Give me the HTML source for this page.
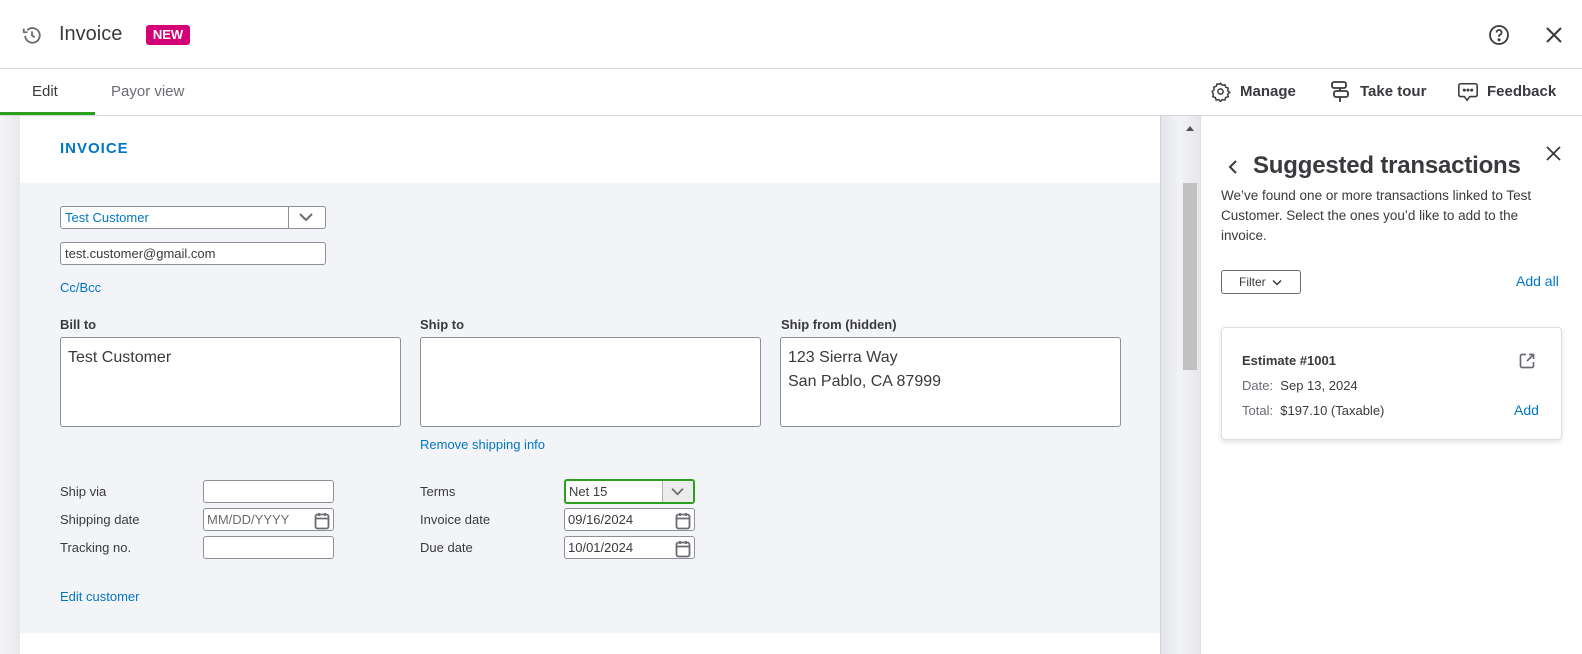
<!DOCTYPE html>
<html><head><meta charset="utf-8"><style>
*{box-sizing:border-box;margin:0;padding:0}
body{width:1582px;height:654px;overflow:hidden;background:#fff;font-family:"Liberation Sans",Arial,sans-serif;position:relative;color:#393a3d}
.abs{position:absolute}
.lbl{font-size:13px;color:#393a3d}
.inp{position:absolute;background:#fff;border:1px solid #8d9096;border-radius:3px;height:23px;font-size:13px;padding:3px 4px}
.link{color:#0077c5;font-size:13px}
.ta{position:absolute;background:#fff;border:1px solid #8d9096;border-radius:3px;width:341px;height:90px;font-size:16px;padding:8px 7px;line-height:24px}
.cal{position:absolute;right:3px;top:3px}
</style></head><body>
<svg class="abs" style="left:21px;top:24px" width="22" height="22" viewBox="0 0 24 24" fill="none" stroke="#6b6c72" stroke-width="2"><path d="M4.5 13a8 8 0 1 0 2.3-6.2"/><path d="M3 5v4h4" stroke-linejoin="round"/><path d="M12 8v4.5l3 2"/></svg>
<div class="abs" style="left:59px;top:23px;font-size:20px;color:#393a3d">Invoice</div>
<div class="abs" style="left:146px;top:25px;width:44px;height:20px;background:#d40078;border-radius:3px;color:#fff;font-weight:bold;font-size:13px;text-align:center;line-height:20px">NEW</div>
<svg class="abs" style="left:1487px;top:23px" width="24" height="24" viewBox="0 0 24 24" fill="none" stroke="#393a3d" stroke-width="1.8"><circle cx="12" cy="12" r="9"/><path d="M9.6 9.5a2.5 2.5 0 1 1 3.4 2.3c-.7.3-1 .8-1 1.5v.5"/><circle cx="12" cy="16.8" r=".6" fill="#393a3d"/></svg>
<svg class="abs" style="left:1544px;top:25px" width="20" height="20" viewBox="0 0 20 20" stroke="#393a3d" stroke-width="2"><path d="M3 3l14 14M17 3L3 17"/></svg>
<div class="abs" style="left:0;top:68px;width:1582px;height:1px;background:#d4d7dc"></div>
<div class="abs" style="left:32px;top:83px;font-size:15px;color:#393a3d">Edit</div>
<div class="abs" style="left:111px;top:83px;font-size:15px;color:#6b6c72">Payor view</div>
<div class="abs" style="left:0;top:112px;width:95px;height:4px;background:#2ca01c"></div>
<div class="abs" style="left:0;top:115px;width:1582px;height:1px;background:#d4d7dc"></div>
<svg class="abs" style="left:1210px;top:81px" width="21" height="21" viewBox="0 0 24 24" fill="none" stroke="#393a3d" stroke-width="1.7"><circle cx="12" cy="12" r="3"/><path d="M12 2.5l2 2.3 3-.6.9 2.9 2.9 1-.6 3 2.3 1.9-2.3 2 .6 3-2.9.9-1 2.9-3-.6-1.9 2.3-2-2.3-3 .6-.9-2.9-2.9-1 .6-3L2.5 12l2.3-2-.6-3 2.9-.9 1-2.9 3 .6z"/></svg>
<div class="abs" style="left:1240px;top:83px;font-size:15px;font-weight:bold;color:#393a3d">Manage</div>
<svg class="abs" style="left:1330px;top:80px" width="20" height="24" viewBox="0 0 20 24" fill="none" stroke="#393a3d" stroke-width="1.8"><rect x="2" y="2" width="14" height="6" rx="2"/><rect x="4" y="11" width="14" height="6" rx="2"/><path d="M10 8v3M10 17v5"/></svg>
<div class="abs" style="left:1360px;top:83px;font-size:15px;font-weight:bold;color:#393a3d">Take tour</div>
<svg class="abs" style="left:1457px;top:81px" width="22" height="22" viewBox="0 0 24 24" fill="none" stroke="#393a3d" stroke-width="1.7"><path d="M4 3h16a2 2 0 0 1 2 2v10a2 2 0 0 1-2 2h-6l-3 4-3-4H4a2 2 0 0 1-2-2V5a2 2 0 0 1 2-2z"/><circle cx="8" cy="10" r=".8" fill="#393a3d"/><circle cx="12" cy="10" r=".8" fill="#393a3d"/><circle cx="16" cy="10" r=".8" fill="#393a3d"/></svg>
<div class="abs" style="left:1487px;top:83px;font-size:15px;font-weight:bold;color:#393a3d">Feedback</div>
<div class="abs" style="left:0;top:116px;width:20px;height:538px;background:linear-gradient(90deg,#f4f5f7,#e8e9ec)"></div>
<div class="abs" style="left:1160px;top:116px;width:40px;height:538px;background:linear-gradient(90deg,#e3e5e8,#f2f3f5 50%,#e6e7ea)"></div>
<div class="abs" style="left:1160px;top:116px;width:1px;height:538px;background:#cfd2d6"></div>
<div class="abs" style="left:1183px;top:183px;width:14px;height:187px;background:#c1c1c1"></div>
<div class="abs" style="left:1186px;top:126px;width:0;height:0;border-left:4px solid transparent;border-right:4px solid transparent;border-bottom:5px solid #505050"></div>
<div class="abs" style="left:1200px;top:116px;width:1px;height:538px;background:#dcdee2"></div>
<div class="abs" style="left:60px;top:140px;font-size:15px;font-weight:bold;color:#0077c5;letter-spacing:1px">INVOICE</div>
<div class="abs" style="left:20px;top:183px;width:1140px;height:450px;background:#f3f4f7"></div>
<div class="inp" style="left:60px;top:206px;width:266px;color:#0077c5;">Test Customer<div class="abs" style="left:227px;top:0;width:1px;height:21px;background:#8d9096"></div><svg class="abs" style="left:237px;top:5px" width="16" height="10" viewBox="0 0 16 10" fill="none" stroke="#6b6c72" stroke-width="2"><path d="M2 2l6 6 6-6"/></svg></div>
<div class="inp" style="left:60px;top:242px;width:266px;color:#393a3d">test.customer@gmail.com</div>
<div class="abs link" style="left:60px;top:280px">Cc/Bcc</div>
<div class="abs lbl" style="left:60px;top:317px;font-weight:bold">Bill to</div>
<div class="abs lbl" style="left:420px;top:317px;font-weight:bold">Ship to</div>
<div class="abs lbl" style="left:781px;top:317px;font-weight:bold">Ship from (hidden)</div>
<div class="ta" style="left:60px;top:337px">Test Customer</div>
<div class="ta" style="left:420px;top:337px"></div>
<div class="ta" style="left:780px;top:337px">123 Sierra Way<br>San Pablo, CA 87999</div>
<div class="abs link" style="left:420px;top:437px">Remove shipping info</div>
<div class="abs lbl" style="left:60px;top:484px">Ship via</div>
<div class="abs lbl" style="left:60px;top:512px">Shipping date</div>
<div class="abs lbl" style="left:60px;top:540px">Tracking no.</div>
<div class="inp" style="left:203px;top:480px;width:131px"></div>
<div class="inp" style="left:203px;top:508px;width:131px;color:#6b6c72;padding-left:3px">MM/DD/YYYY<svg class="cal" width="16" height="18" viewBox="0 0 16 18" fill="none" stroke="#6b6c72" stroke-width="1.8"><rect x="1.5" y="2.5" width="13" height="14" rx="2"/><path d="M1.5 6.5h13M5 1v3M11 1v3"/></svg></div>
<div class="inp" style="left:203px;top:536px;width:131px"></div>
<div class="abs lbl" style="left:420px;top:484px">Terms</div>
<div class="abs lbl" style="left:420px;top:512px">Invoice date</div>
<div class="abs lbl" style="left:420px;top:540px">Due date</div>
<div class="inp" style="left:564px;top:479px;width:131px;height:25px;border:2px solid #2ca01c;padding:3px 3px">Net 15<div class="abs" style="left:96px;top:0;width:31px;height:21px;background:#ececec;border-left:1px solid #b0b2b6"></div><svg class="abs" style="left:104px;top:6px" width="15" height="9" viewBox="0 0 16 10" fill="none" stroke="#6b6c72" stroke-width="2"><path d="M2 2l6 6 6-6"/></svg></div>
<div class="inp" style="left:564px;top:508px;width:131px;padding-left:3px">09/16/2024<svg class="cal" width="16" height="18" viewBox="0 0 16 18" fill="none" stroke="#6b6c72" stroke-width="1.8"><rect x="1.5" y="2.5" width="13" height="14" rx="2"/><path d="M1.5 6.5h13M5 1v3M11 1v3"/></svg></div>
<div class="inp" style="left:564px;top:536px;width:131px;padding-left:3px">10/01/2024<svg class="cal" width="16" height="18" viewBox="0 0 16 18" fill="none" stroke="#6b6c72" stroke-width="1.8"><rect x="1.5" y="2.5" width="13" height="14" rx="2"/><path d="M1.5 6.5h13M5 1v3M11 1v3"/></svg></div>
<div class="abs link" style="left:60px;top:589px">Edit customer</div>
<svg class="abs" style="left:1226px;top:158px" width="14" height="18" viewBox="0 0 14 18" fill="none" stroke="#393a3d" stroke-width="2"><path d="M10 3L4 9l6 6"/></svg>
<div class="abs" style="left:1253px;top:152px;font-size:24px;font-weight:bold;color:#393a3d;letter-spacing:-0.2px">Suggested transactions</div>
<svg class="abs" style="left:1545px;top:145px" width="17" height="17" viewBox="0 0 17 17" stroke="#393a3d" stroke-width="1.8"><path d="M2 2l13 13M15 2L2 15"/></svg>
<div class="abs" style="left:1221px;top:186px;width:322px;font-size:13.5px;line-height:20px;color:#393a3d">We’ve found one or more transactions linked to Test Customer. Select the ones you’d like to add to the invoice.</div>
<div class="abs" style="left:1221px;top:270px;width:80px;height:24px;border:1.5px solid #6b6c72;border-radius:3px;font-size:12px;padding:4px 0 0 17px">Filter <svg width="10" height="7" viewBox="0 0 10 7" fill="none" stroke="#393a3d" stroke-width="1.5" style="margin-left:3px"><path d="M1 1.5l4 4 4-4"/></svg></div>
<div class="abs link" style="left:1516px;top:273px;font-size:14px">Add all</div>
<div class="abs" style="left:1221px;top:327px;width:341px;height:113px;background:#fff;border:1px solid #dcdee2;border-radius:4px;box-shadow:0 2px 5px rgba(0,0,0,.12)"></div>
<div class="abs" style="left:1242px;top:353px;font-size:13px;font-weight:bold;color:#393a3d">Estimate #1001</div>
<svg class="abs" style="left:1518px;top:352px" width="18" height="18" viewBox="0 0 18 18" fill="none" stroke="#6b6c72" stroke-width="1.7"><path d="M8 2.5H4a1.5 1.5 0 0 0-1.5 1.5v10A1.5 1.5 0 0 0 4 15.5h10a1.5 1.5 0 0 0 1.5-1.5v-4"/><path d="M11 2.5h4.5V7M15.5 2.5L9 9"/></svg>
<div class="abs" style="left:1242px;top:378px;font-size:13px;color:#393a3d"><span style="color:#6b6c72">Date:</span>&nbsp; Sep 13, 2024</div>
<div class="abs" style="left:1242px;top:403px;font-size:13px;color:#393a3d"><span style="color:#6b6c72">Total:</span>&nbsp; $197.10 (Taxable)</div>
<div class="abs link" style="left:1514px;top:402px;font-size:14px">Add</div>
</body></html>
